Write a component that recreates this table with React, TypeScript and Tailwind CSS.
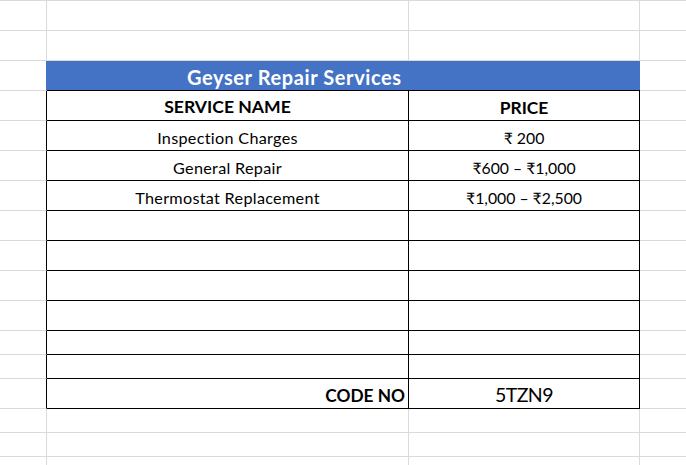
import React from 'react';

// Spreadsheet-style price list: gray gridlines around a bordered table
type Row = {
    h: number;
    kind: 'blank' | 'title' | 'head' | 'item' | 'code';
    name?: string;
    price?: string;
};

const ROWS: Row[] = [
    { h: 30, kind: 'blank' },
    { h: 30, kind: 'blank' },
    { h: 30, kind: 'title' },
    { h: 30, kind: 'head', name: 'SERVICE NAME', price: 'PRICE' },
    { h: 30, kind: 'item', name: 'Inspection Charges', price: '₹ 200' },
    { h: 30, kind: 'item', name: 'General Repair', price: '₹600 – ₹1,000' },
    { h: 30, kind: 'item', name: 'Thermostat Replacement', price: '₹1,000 – ₹2,500' },
    { h: 30, kind: 'item' },
    { h: 30, kind: 'item' },
    { h: 30, kind: 'item' },
    { h: 30, kind: 'item' },
    { h: 24, kind: 'item' },
    { h: 24, kind: 'item' },
    { h: 30, kind: 'code', name: 'CODE NO', price: '5TZN9' },
    { h: 24, kind: 'blank' },
    { h: 24, kind: 'blank' },
    { h: 24, kind: 'blank' },
];

export default function App() {
    return (
        <div className="w-[686px] h-[465px] overflow-hidden bg-white border-t border-[#dadada] font-['Lato','Noto_Sans',sans-serif] text-black">
            {ROWS.map((row, idx) => {
                const inTable = row.kind !== 'blank' && row.kind !== 'title';

                if (row.kind === 'title') {
                    return (
                        <div key={idx} className="flex" style={{ height: row.h }}>
                            <div className="w-[47px] shrink-0 border-r border-b border-r-[#4472c4] border-b-[#dadada]" />
                            <div className="w-[593px] shrink-0 bg-[#4472c4] border-b border-black flex items-end pl-[140px] pb-[3px]">
                                <span className="text-white font-bold text-[20px] tracking-[0.6px] leading-none">Geyser Repair Services</span>
                            </div>
                            <div className="flex-1 border-b border-[#dadada]" />
                        </div>
                    );
                }

                return (
                    <div key={idx} className="flex" style={{ height: row.h }}>
                        <div
                            className={`w-[47px] shrink-0 border-r border-b border-b-[#dadada] ${inTable ? 'border-r-black' : 'border-r-[#dadada]'}`}
                        />
                        <div
                            className={`w-[362px] shrink-0 border-r border-b flex items-end pb-[4px] ${
                                inTable ? 'border-black' : 'border-[#dadada]'
                            } ${row.kind === 'code' ? 'justify-end pr-[3px]' : 'justify-center'}`}
                        >
                            {row.kind === 'head' && <span className="font-bold text-[17.6px] leading-none">{row.name}</span>}
                            {row.kind === 'item' && row.name && (
                                <span className="text-[16.2px] tracking-[0.3px] leading-none">{row.name}</span>
                            )}
                            {row.kind === 'code' && <span className="font-bold text-[17.3px] leading-none">{row.name}</span>}
                        </div>
                        <div
                            className={`w-[231px] shrink-0 border-r border-b flex items-end justify-center pb-[4px] ${
                                inTable ? 'border-black' : 'border-[#dadada]'
                            }`}
                        >
                            {row.kind === 'head' && <span className="font-bold text-[17.4px] leading-none">{row.price}</span>}
                            {row.kind === 'item' && row.price && <span className="text-[15.8px] leading-none">{row.price}</span>}
                            {row.kind === 'code' && (
                                <span className="text-[19.5px] tracking-[-0.6px] leading-none">{row.price}</span>
                            )}
                        </div>
                        <div className="flex-1 border-b border-[#dadada]" />
                    </div>
                );
            })}
        </div>
    );
}
